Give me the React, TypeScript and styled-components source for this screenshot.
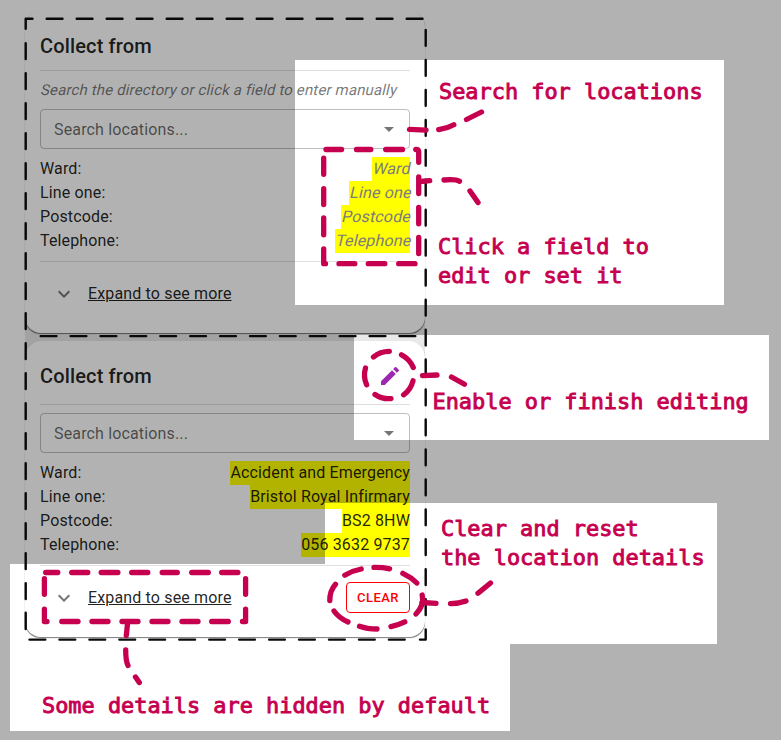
import React from "react";
import styled, { createGlobalStyle } from "styled-components";

const GlobalStyle = createGlobalStyle`
  * { box-sizing: border-box; }
  body { margin: 0; background: #fff; overflow: hidden; }
`;

const Page = styled.main`
  position: relative;
  width: 781px;
  height: 740px;
  overflow: hidden;
  background: #fff;
  color: rgba(0, 0, 0, 0.87);
  font-family: Roboto, "Liberation Sans", sans-serif;
  font-size: 16px;
  line-height: 24px;
  letter-spacing: 0.15px;
`;

const CardStack = styled.div`
  display: flex;
  flex-direction: column;
  gap: 8px;
  width: 400px;
  margin-left: 25px;
  padding-top: 11px;
  background: linear-gradient(#fff 315px, #e9e9e9 315px, #e9e9e9 360px, #fff 360px);
`;

const Card = styled.section<{ $height: number }>`
  display: flex;
  flex-direction: column;
  height: ${(p) => p.$height}px;
  padding: 0 15px;
  border-radius: 16px;
  background: #fff;
  box-shadow: 0 1px 1px -0.5px rgba(0, 0, 0, 0.52);
`;

const CardHeader = styled.header<{ $height: number; $top: number }>`
  display: flex;
  align-items: center;
  justify-content: space-between;
  height: ${(p) => p.$height}px;
  padding-top: ${(p) => p.$top}px;
  border-bottom: 1px solid rgba(0, 0, 0, 0.13);
`;

const Title = styled.h2`
  margin: 0;
  font-size: 20px;
  font-weight: 500;
  line-height: 32px;
  letter-spacing: 0.15px;
`;

const EditButton = styled.button`
  display: flex;
  padding: 10px 8px 10px 10px;
  border: 0;
  background: none;
  color: #9c27b0;
`;

const Hint = styled.p`
  margin: 8px 0 0;
  color: rgba(0, 0, 0, 0.55);
  font-size: 15px;
  letter-spacing: 0.14px;
  line-height: 22px;
  white-space: nowrap;
`;

/* Slants the upright face around its baseline. */
const Slanted = styled.span`
  display: inline-block;
  transform: skewX(-13deg);
  transform-origin: 0 73%;
`;

const SearchField = styled.div`
  display: flex;
  align-items: center;
  justify-content: space-between;
  height: 40px;
  margin-top: 8px;
  padding: 0 8px 0 13px;
  border: 1px solid rgba(0, 0, 0, 0.25);
  border-radius: 4px;
  color: rgba(0, 0, 0, 0.6);
`;

const Placeholder = styled.span`
  padding-top: 2px;
`;

const Details = styled.dl`
  margin: 8px 0;
`;

const DetailRow = styled.div`
  display: flex;
  justify-content: space-between;
  height: 24px;
`;

const Label = styled.dt``;

const Value = styled.dd<{ $empty?: boolean }>`
  margin: 0;
  background: #ff0;
  color: ${(p) => (p.$empty ? "#7c7c7c" : "rgba(0,0,0,.87)")};
`;

const CardFooter = styled.footer`
  display: flex;
  align-items: center;
  justify-content: space-between;
  height: 64px;
  border-top: 1px solid rgba(0, 0, 0, 0.12);
`;

const Expand = styled.button`
  display: flex;
  align-items: center;
  gap: 12px;
  padding: 0 0 0 12px;
  border: 0;
  background: none;
  color: inherit;
  font: inherit;
  letter-spacing: inherit;
`;

const ExpandText = styled.span`
  text-decoration: underline;
`;

const ClearButton = styled.button`
  width: 64px;
  height: 31px;
  padding: 0;
  border: 1px solid #f00;
  border-radius: 4px;
  background: none;
  color: #f00;
  font: 500 13px/22px Roboto, sans-serif;
  letter-spacing: 0.46px;
`;

/* Dims the page except for three spotlit regions. */
const Shade = styled.div`
  position: absolute;
  inset: 0;
  background: rgba(0, 0, 0, 0.3);
  clip-path: path(
    evenodd,
    "M0 0H781V740H0Z M295 60H724V305H295Z M354 335H769V440H354Z M325 503H717V644H510V731H10V564H325Z"
  );
`;

const Annotations = styled.svg`
  position: absolute;
  inset: 0;
  fill: none;
  stroke-linecap: round;
  stroke-linejoin: round;
`;

const Note = styled.p<{ $x: number; $y: number }>`
  position: absolute;
  left: ${(p) => p.$x}px;
  top: ${(p) => p.$y}px;
  margin: 0;
  color: #c6004f;
  font: 400 21.9px/29.3px "DejaVu Sans Mono", monospace;
  letter-spacing: 0;
  -webkit-text-stroke: 0.9px #c6004f;
  white-space: pre;
`;

const notes = [
  { x: 439, y: 77, text: "Search for locations" },
  { x: 438, y: 232, text: "Click a field to\nedit or set it" },
  { x: 432.5, y: 387, text: "Enable or finish editing" },
  { x: 441, y: 514, text: "Clear and reset\nthe location details" },
  { x: 42, y: 691, text: "Some details are hidden by default" },
];

const dashes = [
  // field group
  "M326 149.5H341.6M356.5 149.5H370.8M385.7 149.5H402.5M415.8 149.5Q418.7 149.5 418.7 152V162.3",
  "M418.7 177V193.5M418.7 207.3V223.8M418.7 237.3V253.7",
  "M323.7 158.2V174.3M323.7 188.7V204.5M323.7 218V234.8M323.7 248.8V263.7H325.5",
  "M339 263.7H354.8M368.3 263.7H384.8M398.7 263.7H415",
  // expand group
  "M45.7 572.5H57.8M71.7 572.5H87.8M101.2 572.5H117.9M131.7 572.5H147.8M162.2 572.5H177.3M191.7 572.5H208.3M221.7 572.5H237.9",
  "M245.6 578.7V594.3M245.6 609.2V621.5H242.5M44.4 578.7V594.3M44.4 609.2V621.5H47",
  "M61.8 621.5H78M92 621.5H108M122 621.5H138M152 621.5H168M182 621.5H198M211.7 621.5H228.3",
  // edit circle
  "M373.5 357A24.5 24.5 0 0 1 389.3 351.3M401.5 354.8A24.5 24.5 0 0 1 413.3 367.6M413 380.8A24.5 24.5 0 0 1 403.6 394.8M391 398.6A24.5 24.5 0 0 1 375 394.5M366.6 384.8A24.5 24.5 0 0 1 365.5 368",
  // clear ellipse
  "M344.8 575.2Q353 570.5 361.2 569M374 567.4Q382 567.2 389.6 568.8M402.8 573.3Q411 577 416.8 583M422.2 595Q424.5 605 416 614M404.8 621.8Q398 625 391 626.6M377 629Q367 629 359.5 626.3M348 622Q339 618 334 611M329.8 600.5Q329.6 591 335.5 584.2",
  // connectors
  "M409.5 129.3L426 130.2M438.7 129.7Q447 128.5 453.8 124.7M466.5 119.5L481.5 112",
  "M420 181.5L429.7 180.7M444 180Q456 179 459.5 181.3M470 191L478 202.5",
  "M422.5 375.6L437 375M451.5 377L464.5 384.3",
  "M422 602.5L436 603.3M450.5 603.6Q459 603.6 466 601M478 593.3L490.5 583",
  "M127.5 624L126.3 635.5M125.7 650Q125.7 661 128 665.5M135.5 677L139.3 682.5",
];

const ArrowDown = () => (
  <svg width="24" height="24" viewBox="0 0 24 24" fill="rgba(0,0,0,.54)">
    <path d="M7 10l5 5 5-5z" />
  </svg>
);

const Chevron = () => (
  <svg width="24" height="24" viewBox="0 0 24 24" fill="rgba(0,0,0,.54)">
    <path d="M16.59 8.59 12 13.17 7.41 8.59 6 10l6 6 6-6z" />
  </svg>
);

const Pencil = () => (
  <svg width="24" height="24" viewBox="0 0 24 24" fill="currentColor">
    <path d="M3 17.25V21h3.75L17.81 9.94l-3.75-3.75L3 17.25zM20.71 7.04a1 1 0 0 0 0-1.41l-2.34-2.34a1 1 0 0 0-1.41 0l-1.83 1.83 3.75 3.75 1.83-1.83z" />
  </svg>
);

type Detail = [label: string, value: string];

const DetailList = ({ items, empty }: { items: Detail[]; empty?: boolean }) => (
  <Details>
    {items.map(([label, value]) => (
      <DetailRow key={label}>
        <Label>{label}</Label>
        <Value $empty={empty}>{empty ? <Slanted>{value}</Slanted> : value}</Value>
      </DetailRow>
    ))}
  </Details>
);

const ExpandToggle = () => (
  <Expand>
    <Chevron />
    <ExpandText>Expand to see more</ExpandText>
  </Expand>
);

const Search = () => (
  <SearchField>
    <Placeholder>Search locations...</Placeholder>
    <ArrowDown />
  </SearchField>
);

export default function App() {
  return (
    <>
      <GlobalStyle />
      <Page>
        <CardStack>
          <Card $height={322}>
            <CardHeader $height={60} $top={10}>
              <Title>Collect from</Title>
            </CardHeader>
            <Hint>
              <Slanted>Search the directory or click a field to enter manually</Slanted>
            </Hint>
            <Search />
            <DetailList
              empty
              items={[
                ["Ward:", "Ward"],
                ["Line one:", "Line one"],
                ["Postcode:", "Postcode"],
                ["Telephone:", "Telephone"],
              ]}
            />
            <CardFooter>
              <ExpandToggle />
            </CardFooter>
          </Card>
          <Card $height={296}>
            <CardHeader $height={64} $top={6}>
              <Title>Collect from</Title>
              <EditButton aria-label="Edit">
                <Pencil />
              </EditButton>
            </CardHeader>
            <Search />
            <DetailList
              items={[
                ["Ward:", "Accident and Emergency"],
                ["Line one:", "Bristol Royal Infirmary"],
                ["Postcode:", "BS2 8HW"],
                ["Telephone:", "056 3632 9737"],
              ]}
            />
            <CardFooter>
              <ExpandToggle />
              <ClearButton>CLEAR</ClearButton>
            </CardFooter>
          </Card>
        </CardStack>
        <Shade />
        <Annotations width="781" height="740" viewBox="0 0 781 740">
          <g stroke="#080808" strokeWidth="2.4">
            <path d="M25.7 28.7V18.7H32.5M25.7 612.7V629" />
            <path d="M46.7 18.7H425" strokeDasharray="15.8 14.2" />
            <path d="M25.7 43.2V601" strokeDasharray="15.8 14.2" />
            <path d="M425.7 30V617" strokeDasharray="15.8 14.16" />
            <path d="M425.7 629.5V639.6H420" />
            <path d="M40.7 336.1H420" strokeDasharray="15.8 14.1" />
            <path d="M29.5 639.6H408" strokeDasharray="15.8 14.15" />
          </g>
          <g stroke="#c6004f" strokeWidth="5.3">
            {dashes.map((d) => (
              <path key={d} d={d} />
            ))}
          </g>
        </Annotations>
        {notes.map((note) => (
          <Note key={note.text} $x={note.x} $y={note.y}>
            {note.text}
          </Note>
        ))}
      </Page>
    </>
  );
}
